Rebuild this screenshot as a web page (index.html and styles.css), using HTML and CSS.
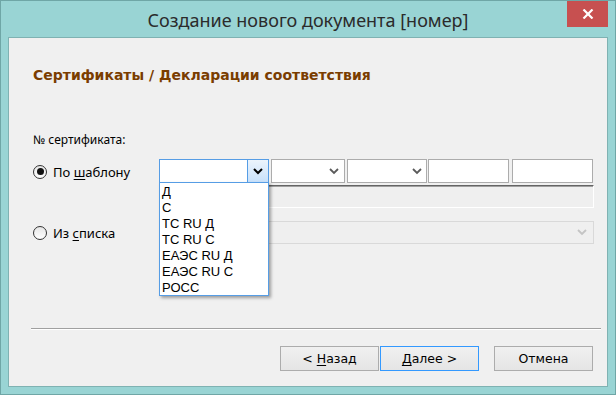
FILE: index.html
```html
<!DOCTYPE html>
<html lang="ru">
<head>
    <meta charset="UTF-8">
    <title>Создание нового документа [номер]</title>
    <link rel="stylesheet" href="styles.css">
</head>
<body>
    <div class="window">
        <div class="titlebar">
            <span></span>
            <h1 class="title">Создание нового документа [номер]</h1>
            <button class="close" type="button" aria-label="Закрыть">
                <svg width="12" height="10" viewBox="0 0 12 10">
                    <path d="M1.5 0.5 L10.5 9.5 M10.5 0.5 L1.5 9.5" stroke="#fff" stroke-width="2.2" fill="none"/>
                </svg>
            </button>
        </div>

        <div class="client">
            <h2 class="section-title">Сертификаты / Декларации соответствия</h2>

            <div class="cert">
                <div class="cert-label">№ сертификата:</div>

                <div class="cert-grid">
                    <label class="radio">
                        <span class="radio-dot checked"></span>
                        <span>По <u>ш</u>аблону</span>
                    </label>
                    <div class="fields">
                        <div class="combo focused w1">
                            <span class="combo-btn">
                                <svg width="10" height="7" viewBox="0 0 10 7"><path d="M1 1 L5 5 L9 1" stroke="#000" stroke-width="2" fill="none"/></svg>
                            </span>
                            <ul class="droplist">
                                <li>Д</li>
                                <li>С</li>
                                <li>ТС RU Д</li>
                                <li>ТС RU С</li>
                                <li>ЕАЭС RU Д</li>
                                <li>ЕАЭС RU С</li>
                                <li>РОСС</li>
                            </ul>
                        </div>
                        <div class="combo w2">
                            <span class="combo-btn">
                                <svg width="10" height="7" viewBox="0 0 10 7"><path d="M1 1 L5 5 L9 1" stroke="#5a5a5a" stroke-width="1.8" fill="none"/></svg>
                            </span>
                        </div>
                        <div class="combo w3">
                            <span class="combo-btn">
                                <svg width="10" height="7" viewBox="0 0 10 7"><path d="M1 1 L5 5 L9 1" stroke="#5a5a5a" stroke-width="1.8" fill="none"/></svg>
                            </span>
                        </div>
                        <div class="textbox w4"></div>
                        <div class="textbox w5"></div>
                    </div>

                    <span></span>
                    <div class="sunken"></div>

                    <label class="radio">
                        <span class="radio-dot"></span>
                        <span>Из <u>с</u>писка</span>
                    </label>
                    <div class="combo disabled">
                        <span class="combo-btn">
                            <svg width="10" height="7" viewBox="0 0 10 7"><path d="M1 1 L5 5 L9 1" stroke="#c4c4c4" stroke-width="1.8" fill="none"/></svg>
                        </span>
                    </div>
                </div>
            </div>

            <div class="separator"></div>

            <div class="buttons">
                <button type="button" class="btn">&lt; <u>Н</u>азад</button>
                <button type="button" class="btn default"><u>Д</u>алее &gt;</button>
                <button type="button" class="btn cancel">Отмена</button>
            </div>
        </div>
    </div>
</body>
</html>
```

FILE: styles.css
```css
body {
    margin: 0;
    padding: 0;
    font-family: "Noto Sans", "Open Sans", sans-serif;
    font-size: 12px;
    color: #000;
}
.window {
    width: 616px;
    height: 395px;
    box-sizing: border-box;
    border: 1px solid #6fa6a6;
    background-color: #99d4d4;
    padding: 0 7px 7px 7px;
    display: flex;
    flex-direction: column;
}
.titlebar {
    height: 36px;
    display: grid;
    grid-template-columns: 1fr auto 1fr;
    align-items: start;
    margin: 0 -7px;
}
.title {
    margin: 0;
    padding-top: 7px;
    font-size: 18px;
    font-weight: normal;
    line-height: 24px;
    color: #2b2b2b;
    white-space: nowrap;
}
.close {
    justify-self: end;
    margin-right: 7px;
    width: 41px;
    height: 26px;
    border: none;
    padding: 0;
    background-color: #c75050;
    display: flex;
    align-items: center;
    justify-content: center;
}
.client {
    flex: 1;
    border: 1px solid #7fb2b2;
    background-color: #f0f0f0;
    padding: 0 0 0 24px;
}
.section-title {
    margin: 28px 0 0 0;
    font-family: "DejaVu Sans", Verdana, sans-serif;
    font-size: 14px;
    font-weight: bold;
    line-height: 18px;
    color: #7a3d00;
}
.cert {
    margin-top: 48px;
}
.cert-label {
    line-height: 16px;
}
.cert-grid {
    margin-top: 11px;
    display: grid;
    grid-template-columns: 126px 434px;
    grid-template-rows: 24px 23px 34px;
    row-gap: 2px;
}
.radio {
    display: flex;
    align-items: center;
    align-self: end;
    height: 23px;
    gap: 6px;
    font-size: 13px;
}
.radio-dot {
    width: 14px;
    height: 14px;
    box-sizing: border-box;
    border: 1px solid #333;
    border-radius: 50%;
    background: linear-gradient(#e6e6e6, #ffffff);
    display: flex;
    align-items: center;
    justify-content: center;
}
.radio-dot.checked::after {
    content: "";
    width: 7px;
    height: 7px;
    border-radius: 50%;
    background-color: #111;
}
.fields {
    display: flex;
}
.combo, .textbox {
    box-sizing: border-box;
    height: 24px;
    border: 1px solid #acacac;
    background-color: #fff;
    position: relative;
    display: flex;
    justify-content: flex-end;
}
.w1 { width: 110px; }
.w2 { width: 74px; margin-left: 2px; }
.w3 { width: 81px; margin-left: 2px; }
.w4 { width: 81px; margin-left: 1px; }
.w5 { width: 81px; margin-left: 3px; }
.combo-btn {
    width: 19px;
    display: flex;
    align-items: center;
    justify-content: center;
}
.combo.focused {
    border-color: #569de5;
}
.combo.focused .combo-btn {
    width: 20px;
    border-left: 1px solid #569de5;
    background: linear-gradient(#ecf4fc, #c8e1fb);
}
.droplist {
    position: absolute;
    left: -1px;
    top: 22px;
    width: 110px;
    height: 114px;
    box-sizing: border-box;
    margin: 0;
    padding: 1px 0 0 2px;
    list-style: none;
    background-color: #fff;
    border: 1px solid #569de5;
    box-shadow: 2px 2px 3px rgba(0, 0, 0, 0.35);
    z-index: 2;
}
.droplist li {
    line-height: 16px;
    height: 16px;
    font-family: "Liberation Sans", Arial, sans-serif;
    font-size: 13px;
}
.sunken {
    box-sizing: border-box;
    height: 23px;
    width: 435px;
    border-top: 1px solid #646464;
    border-left: 1px solid #646464;
    border-right: 1px solid #ffffff;
    border-bottom: 1px solid #ffffff;
    box-shadow: inset 1px 1px 0 #a0a0a0;
    background-color: #efefef;
}
.combo.disabled {
    width: 435px;
    height: 23px;
    align-self: end;
    border-color: #d9d9d9;
    background-color: #efefef;
}
.combo.disabled .combo-btn {
    width: 22px;
}
.separator {
    margin: 84px 0 0 -2px;
    width: 570px;
    height: 1px;
    background-color: #a0a0a0;
    border-bottom: 1px solid #fff;
}
.buttons {
    margin-top: 16px;
    display: flex;
    padding-left: 247px;
}
.btn {
    box-sizing: border-box;
    width: 99px;
    height: 25px;
    border: 1px solid #acacac;
    background: linear-gradient(#f0f0f0, #e5e5e5);
    font-family: "DejaVu Sans", Tahoma, sans-serif;
    font-size: 12.5px;
    color: #000;
    padding: 0;
}
.btn.default {
    margin-left: 1px;
    border-color: #3399ff;
}
.btn.cancel {
    margin-left: 15px;
}
u {
    text-decoration-thickness: 1px;
    text-underline-offset: 2px;
}
```
